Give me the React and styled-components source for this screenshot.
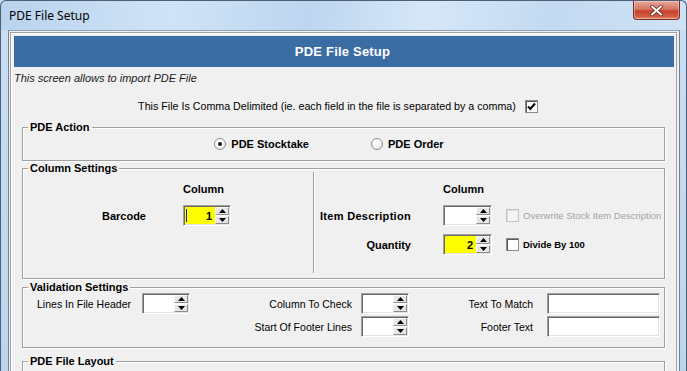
import styled, { createGlobalStyle } from "styled-components";

const GlobalStyle = createGlobalStyle`
  html, body { margin: 0; padding: 0; background: #ffffff; }
  body { font-family: "Liberation Sans", Arial, sans-serif; color: #000; }
`;

function UpArrow() {
  return (
    <svg width="7" height="4" viewBox="0 0 7 4">
      <path d="M3.5 0L7 4H0z" fill="#000" />
    </svg>
  );
}

function DownArrow() {
  return (
    <svg width="7" height="4" viewBox="0 0 7 4">
      <path d="M0 0H7L3.5 4z" fill="#000" />
    </svg>
  );
}

function Spinner({ value, highlight, caret, width = 48 }) {
  return (
    <SpinBox $w={width}>
      <SpinField $highlight={highlight}>
        {caret && <Caret />}
        {value}
      </SpinField>
      <SpinButtons>
        <SpinBtn><UpArrow /></SpinBtn>
        <SpinBtn><DownArrow /></SpinBtn>
      </SpinButtons>
    </SpinBox>
  );
}

function CheckBox({ checked, disabled }) {
  return (
    <Check $disabled={disabled}>
      {checked && (
        <svg width="11" height="11" viewBox="0 0 11 11">
          <path d="M2 5.5L4.3 8L9 2.5" fill="none" stroke="#000" strokeWidth="2" />
        </svg>
      )}
    </Check>
  );
}

function Radio({ checked, label }) {
  return (
    <RadioOption>
      <RadioCircle>{checked && <RadioDot />}</RadioCircle>
      <RadioLabel>{label}</RadioLabel>
    </RadioOption>
  );
}

export default function App() {
  return (
    <>
      <GlobalStyle />
      <Window>
        <TitleBar>
          <Title>PDE File Setup</Title>
          <CloseButton>
            <svg width="13" height="11" viewBox="0 0 13 11">
              <path d="M2 1.5L11 9.5M11 1.5L2 9.5" stroke="#6b2318" strokeWidth="3.6" strokeLinecap="round" />
              <path d="M2 1.5L11 9.5M11 1.5L2 9.5" stroke="#ffffff" strokeWidth="2" strokeLinecap="round" />
            </svg>
          </CloseButton>
        </TitleBar>
        <FrameBody>
          <SideFrame $side="left" />
          <Client>
            <Panel>
              <Banner>PDE File Setup</Banner>
              <Intro>This screen allows to import PDE File</Intro>
              <CommaRow>
                <span>This File Is Comma Delimited (ie. each field in the file is separated by a comma)</span>
                <CheckBox checked />
              </CommaRow>

              <Group $mt={8}>
                <Legend>PDE Action</Legend>
                <RadioRow>
                  <Radio checked label="PDE Stocktake" />
                  <Radio label="PDE Order" />
                </RadioRow>
              </Group>

              <Group $mt={1}>
                <Legend>Column Settings</Legend>
                <ColumnBody>
                  <LeftCols>
                    <ColHeader>Column</ColHeader>
                    <BoldLabel $pr={37}>Barcode</BoldLabel>
                    <Spinner value="1" highlight caret />
                  </LeftCols>
                  <RightCols>
                    <ColHeader>Column</ColHeader>
                    <BoldLabel $pr={32} $wide>Item Description</BoldLabel>
                    <Spinner width={49} />
                    <CheckOption>
                      <CheckBox disabled />
                      <OptionText $disabled>Overwrite Stock Item Description</OptionText>
                    </CheckOption>
                    <BoldLabel $pr={32}>Quantity</BoldLabel>
                    <Spinner width={49} value="2" highlight />
                    <CheckOption>
                      <CheckBox />
                      <OptionText>Divide By 100</OptionText>
                    </CheckOption>
                  </RightCols>
                </ColumnBody>
              </Group>

              <Group $mt={2}>
                <Legend>Validation Settings</Legend>
                <ValidationGrid>
                  <PlainLabel $pr={11}>Lines In File Header</PlainLabel>
                  <Spinner />
                  <PlainLabel $pr={9}>Column To Check</PlainLabel>
                  <Spinner />
                  <PlainLabel $pr={14}>Text To Match</PlainLabel>
                  <TextBox />
                  <span />
                  <span />
                  <PlainLabel $pr={9}>Start Of Footer Lines</PlainLabel>
                  <Spinner />
                  <PlainLabel $pr={14}>Footer Text</PlainLabel>
                  <TextBox />
                </ValidationGrid>
              </Group>

              <Group $mt={7}>
                <Legend>PDE File Layout</Legend>
                <LayoutBody />
              </Group>
            </Panel>
          </Client>
          <SideFrame $side="right" />
        </FrameBody>
      </Window>
    </>
  );
}

const Window = styled.div`
  width: 687px;
  height: 371px;
  overflow: hidden;
  display: flex;
  flex-direction: column;
  background: #c6dcf2;
`;

const TitleBar = styled.div`
  height: 30px;
  flex: none;
  display: flex;
  justify-content: space-between;
  align-items: flex-start;
  box-sizing: border-box;
  border-top: 1px solid #4d5f73;
  border-left: 1px solid #4d5f73;
  border-right: 1px solid #4d5f73;
  border-radius: 6px 6px 0 0;
  background: linear-gradient(
    100deg,
    #b9d3ee 0%,
    #cfe3f7 25%,
    #bdd6f0 45%,
    #d6e7f8 62%,
    #c3daf2 80%,
    #cfe2f6 100%
  );
`;

const Title = styled.div`
  font-family: "Noto Sans", "DejaVu Sans", sans-serif;
  font-size: 12px;
  line-height: 29px;
  padding-left: 8px;
  color: #000;
`;

const CloseButton = styled.div`
  width: 47px;
  height: 19px;
  margin-right: 6px;
  box-sizing: border-box;
  border: 1px solid #7a2d24;
  border-top: none;
  border-radius: 0 0 4px 4px;
  display: flex;
  align-items: center;
  justify-content: center;
  background: linear-gradient(180deg, #e9a899 0%, #d67764 45%, #c4432d 55%, #cf5a3e 85%, #e08e6f 100%);
  box-shadow: inset 0 0 0 1px rgba(255, 255, 255, 0.35);
`;

const FrameBody = styled.div`
  flex: 1;
  display: flex;
  min-height: 0;
`;

const SideFrame = styled.div`
  width: ${(p) => (p.$side === "left" ? 8 : 7)}px;
  flex: none;
  box-sizing: border-box;
  background: linear-gradient(180deg, #c9def3, #bcd5ef);
  border-${(p) => p.$side}: 1px solid #4d5f73;
`;

const Client = styled.div`
  flex: 1;
  min-width: 0;
  background: #f0f0f0;
  border-left: 1px solid #6f8093;
  border-right: 1px solid #6f8093;
  border-top: 1px solid #8fa2b6;
  box-sizing: border-box;
  padding: 1px 2px 0 1px;
`;

const Panel = styled.div`
  border: 1px solid #a0a0a0;
  box-shadow: inset 1px 1px 0 #ffffff;
  padding: 3px 2px 0 3px;
  display: flex;
  flex-direction: column;
`;

const Banner = styled.div`
  height: 31px;
  line-height: 31px;
  background: #3b6da5;
  color: #ffffff;
  font-weight: bold;
  font-size: 13px;
  letter-spacing: 0.2px;
  text-align: center;
  padding-right: 3px;
`;

const Intro = styled.div`
  margin-top: 5px;
  font-size: 11px;
  line-height: 13px;
  font-style: italic;
  color: #1a1a1a;
`;

const CommaRow = styled.div`
  margin-top: 15px;
  display: flex;
  align-items: center;
  justify-content: center;
  gap: 9px;
  padding-right: 12px;
  font-size: 10.7px;
  line-height: 13px;
  height: 13px;
`;

const Check = styled.span`
  width: 13px;
  height: 13px;
  box-sizing: border-box;
  flex: none;
  display: inline-flex;
  align-items: center;
  justify-content: center;
  background: ${(p) => (p.$disabled ? "#f4f4f4" : "#ffffff")};
  border: 1px solid ${(p) => (p.$disabled ? "#c4c4c4" : "#8a8a8a")};
  box-shadow: inset 1px 1px 0 ${(p) => (p.$disabled ? "#dcdcdc" : "#5a5a5a")};
`;

const Group = styled.fieldset`
  margin: ${(p) => p.$mt}px 9px 0 8px;
  padding: 0;
  min-width: 0;
  border: 1px solid #a0a0a0;
  box-shadow: inset 1px 1px 0 #ffffff, 1px 1px 0 #ffffff;
`;

const Legend = styled.legend`
  margin-left: 5px;
  padding: 0 2px;
  font-size: 11px;
  font-weight: bold;
  line-height: 13px;
`;

const RadioRow = styled.div`
  display: flex;
  justify-content: center;
  gap: 62px;
  padding: 3px 29px 10px 0;
`;

const RadioOption = styled.div`
  display: flex;
  align-items: center;
  gap: 5px;
  height: 13px;
`;

const RadioCircle = styled.span`
  width: 12px;
  height: 12px;
  box-sizing: border-box;
  border-radius: 50%;
  border: 1px solid #8f8f8f;
  background: radial-gradient(circle at 40% 35%, #ffffff 30%, #dcdcdc 100%);
  display: inline-flex;
  align-items: center;
  justify-content: center;
`;

const RadioDot = styled.span`
  width: 4px;
  height: 4px;
  border-radius: 50%;
  background: #1a1a1a;
`;

const RadioLabel = styled.span`
  font-size: 11px;
  font-weight: bold;
`;

const ColumnBody = styled.div`
  display: flex;
  align-items: stretch;
`;

const LeftCols = styled.div`
  width: 290px;
  flex: none;
  display: grid;
  grid-template-columns: 160px 48px;
  grid-template-rows: 14px 21px 21px;
  row-gap: 8px;
  align-content: start;
  padding: 8px 0 23px;
`;

const RightCols = styled.div`
  flex: 1;
  display: grid;
  grid-template-columns: 129px 63px 1fr;
  grid-template-rows: 14px 21px 21px;
  row-gap: 8px;
  align-content: start;
  margin: -3px 0 5px;
  padding: 11px 0 18px;
  border-left: 1px solid #a0a0a0;
  box-shadow: inset 1px 0 0 #ffffff;
`;

const ColHeader = styled.div`
  grid-column: 2 / span 2;
  font-size: 11px;
  font-weight: bold;
  line-height: 13px;
`;

const BoldLabel = styled.div`
  grid-column: 1;
  align-self: center;
  text-align: right;
  padding-right: ${(p) => p.$pr}px;
  font-size: 11px;
  font-weight: bold;
  letter-spacing: ${(p) => (p.$wide ? "0.3px" : "0")};
  white-space: nowrap;
`;

const CheckOption = styled.div`
  display: flex;
  align-items: center;
  gap: 4px;
`;

const OptionText = styled.span`
  font-size: 9.5px;
  font-weight: ${(p) => (p.$disabled ? "normal" : "bold")};
  color: ${(p) => (p.$disabled ? "#a3a3a3" : "#000")};
  white-space: nowrap;
`;

const SpinBox = styled.div`
  width: ${(p) => p.$w}px;
  height: 21px;
  box-sizing: border-box;
  display: flex;
  border: 1px solid;
  border-color: #a0a0a0 #ffffff #ffffff #a0a0a0;
  box-shadow: inset 1px 1px 0 #696969, inset -1px -1px 0 #e3e3e3;
  background: #ffffff;
  padding: 1px;
`;

const SpinField = styled.div`
  position: relative;
  flex: 1;
  background: ${(p) => (p.$highlight ? "#ffff00" : "#ffffff")};
  font-size: 11px;
  font-weight: bold;
  display: flex;
  align-items: center;
  justify-content: flex-end;
  padding-right: 3px;
`;

const Caret = styled.span`
  position: absolute;
  left: 1px;
  top: 2px;
  bottom: 2px;
  width: 1px;
  background: #1020c0;
`;

const SpinButtons = styled.div`
  width: 14px;
  display: flex;
  flex-direction: column;
  gap: 1px;
  background: #ffffff;
`;

const SpinBtn = styled.div`
  flex: 1;
  display: flex;
  align-items: center;
  justify-content: center;
  background: #e6e6e6;
  border: 1px solid;
  border-color: #f8f8f8 #8c8c8c #8c8c8c #f8f8f8;
`;

const ValidationGrid = styled.div`
  display: grid;
  grid-template-columns: 119px 48px 171px 48px 138px 113px;
  grid-template-rows: 21px 21px;
  row-gap: 2px;
  margin-top: -1px;
  padding-bottom: 10px;
`;

const PlainLabel = styled.div`
  align-self: center;
  text-align: right;
  padding-right: ${(p) => p.$pr}px;
  font-size: 10.5px;
  white-space: nowrap;
`;

const TextBox = styled.div`
  height: 21px;
  box-sizing: border-box;
  border: 1px solid;
  border-color: #a0a0a0 #ffffff #ffffff #a0a0a0;
  box-shadow: inset 1px 1px 0 #696969, inset -1px -1px 0 #e3e3e3;
  background: #ffffff;
`;

const LayoutBody = styled.div`
  height: 40px;
`;
